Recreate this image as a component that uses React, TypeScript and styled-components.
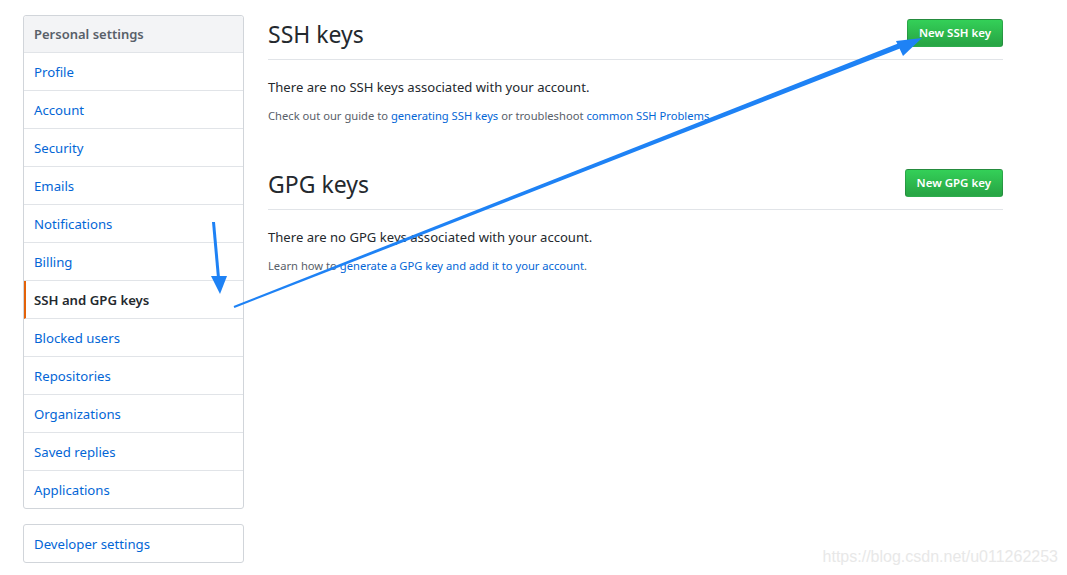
import React from 'react';
import styled, { createGlobalStyle } from 'styled-components';

const Global = createGlobalStyle`
    body {
        margin: 0;
        background: #fff;
        font-family: "Noto Sans", "Open Sans", sans-serif;
        color: #24292e;
    }
`;

const Layout = styled.div`
    position: relative;
    width: 1067px;
    height: 575px;
    overflow: hidden;
    display: flex;
    align-items: flex-start;
    gap: 24px;
    padding: 15px 0 0 23px;
    box-sizing: border-box;
`;

const Side = styled.div`
    width: 221px;
    flex-shrink: 0;
`;

const Menu = styled.nav`
    border: 1px solid #d1d5da;
    border-radius: 3px;
    background: #fff;
`;

const MenuHeading = styled.div`
    padding: 8px 10px;
    line-height: 20px;
    font-size: 13px;
    font-weight: 600;
    color: #586069;
    background: #f3f4f6;
    border-bottom: 1px solid #e1e4e8;
    border-radius: 3px 3px 0 0;
`;

const MenuItem = styled.a<{ $selected?: boolean }>`
    display: block;
    padding: 9px 10px 7px ${p => p.$selected ? '8px' : '10px'};
    line-height: 21px;
    font-size: 13.2px;
    text-decoration: none;
    color: ${p => p.$selected ? '#24292e' : '#0366d6'};
    font-weight: ${p => p.$selected ? 600 : 400};
    border-left: ${p => p.$selected ? '2px solid #e36209' : 'none'};
    border-bottom: 1px solid #e1e4e8;

    &:last-child {
        border-bottom: none;
    }
`;

const DevMenu = styled(Menu)`
    margin-top: 15px;
`;

const Main = styled.main`
    width: 735px;
`;

const Section = styled.section`
    & + & {
        margin-top: 40px;
    }
`;

const Head = styled.div`
    display: flex;
    align-items: center;
    justify-content: space-between;
    padding-bottom: 8px;
    border-bottom: 1px solid #e1e4e8;

    h2 {
        margin: 0;
        font-size: 23px;
        font-weight: 400;
        line-height: 36px;
        padding-top: 1px;
        margin-bottom: -1px;
    }
`;

const GreenButton = styled.button`
    font-family: inherit;
    font-size: 11.5px;
    font-weight: 600;
    line-height: 20px;
    padding: 3px 11px;
    color: #fff;
    background: linear-gradient(-180deg, #34d058 0%, #28a745 90%);
    border: 1px solid rgba(27, 31, 35, 0.2);
    border-radius: 3px;
    cursor: pointer;
`;

const Lead = styled.p`
    margin: 17px 0 0;
    font-size: 13.1px;
    line-height: 20px;
`;

const Note = styled.p`
    margin: 10px 0 0;
    font-size: 11.2px;
    line-height: 18px;
    color: #586069;

    a {
        color: #0366d6;
        text-decoration: none;
    }
`;

const Overlay = styled.svg`
    position: absolute;
    left: 0;
    top: 0;
    pointer-events: none;
`;

const Watermark = styled.div`
    position: absolute;
    right: 9px;
    bottom: 9px;
    font-family: "Liberation Sans", Arial, sans-serif;
    font-size: 16px;
    color: #e8e8e8;
`;

const items = [
    'Profile', 'Account', 'Security', 'Emails', 'Notifications', 'Billing',
    'SSH and GPG keys', 'Blocked users', 'Repositories', 'Organizations',
    'Saved replies', 'Applications',
];

const App = () => (
    <>
        <Global/>
        <Layout>
            <Side>
                <Menu>
                    <MenuHeading>Personal settings</MenuHeading>
                    {items.map(name => (
                        <MenuItem key={name} href="#" $selected={name === 'SSH and GPG keys'}>{name}</MenuItem>
                    ))}
                </Menu>
                <DevMenu>
                    <MenuItem href="#">Developer settings</MenuItem>
                </DevMenu>
            </Side>
            <Main>
                <Section>
                    <Head>
                        <h2>SSH keys</h2>
                        <GreenButton>New SSH key</GreenButton>
                    </Head>
                    <Lead>There are no SSH keys associated with your account.</Lead>
                    <Note>
                        Check out our guide to <a href="#">generating SSH keys</a> or troubleshoot <a href="#">common SSH Problems</a>.
                    </Note>
                </Section>
                <Section>
                    <Head>
                        <h2>GPG keys</h2>
                        <GreenButton>New GPG key</GreenButton>
                    </Head>
                    <Lead>There are no GPG keys associated with your account.</Lead>
                    <Note>
                        Learn how to <a href="#">generate a GPG key and add it to your account</a>.
                    </Note>
                </Section>
            </Main>
            {/* annotation arrows drawn over the page */}
            <Overlay width="1067" height="575" viewBox="0 0 1067 575">
                <polygon points="212,222 215,222 220,278 217,278" fill="#1e82f5"/>
                <polygon points="211,276 227,276 220,294" fill="#1e82f5"/>
                <polygon points="233.6,306 234.4,308 900,48.5 898,43.5" fill="#1e82f5"/>
                <polygon points="922,38 896,41 903,56" fill="#1e82f5"/>
            </Overlay>
            <Watermark>https://blog.csdn.net/u011262253</Watermark>
        </Layout>
    </>
);

export default App;
